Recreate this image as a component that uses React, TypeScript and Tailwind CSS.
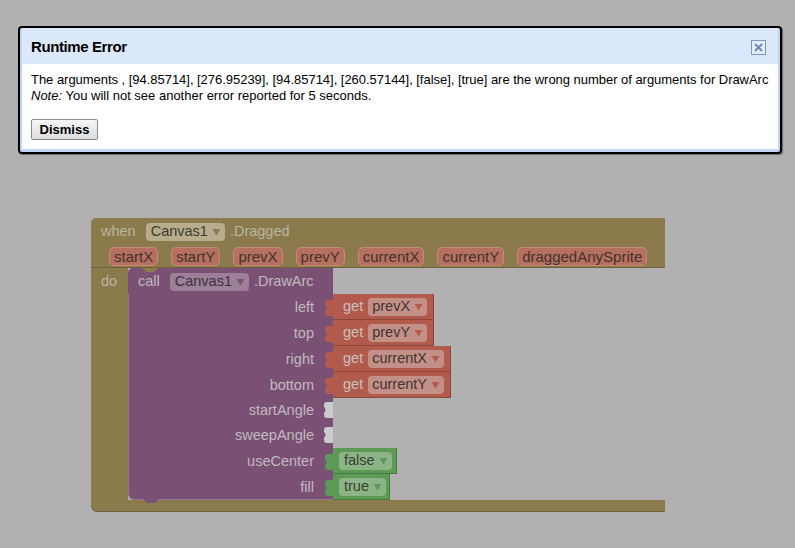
import React from "react";

const Arrow = ({ color }: { color: string }) => (
  <svg width="9" height="8" viewBox="0 0 9 8" className="ml-[4px]">
    <path d="M0.5 1 L8.5 1 L4.5 7.5 Z" fill={color} />
  </svg>
);

const Tab = ({ color }: { color: string }) => (
  <svg width="9" height="16" viewBox="0 0 9 16" className="absolute left-[-8px] top-[6px]">
    <path d="M9 0 L3 0 Q0 0 0 3 L0 5 Q3 8 0 11 L0 13 Q0 16 3 16 L9 16 Z" fill={color} />
  </svg>
);

const EmptySocket = () => (
  <svg width="9" height="16" viewBox="0 0 9 16" className="absolute right-0 top-[4px]">
    <path d="M9 0 L3 0 Q0 0 0 3 L0 5 Q3 8 0 11 L0 13 Q0 16 3 16 L9 16 Z" fill="#cbcbcb" />
  </svg>
);

const GetBlock = ({ name, w }: { name: string; w: string }) => (
  <div className={`relative h-[26px] ${w} bg-[#b25a4b] border-r border-b border-[#8c4539] flex items-center pl-[10px]`}>
    <Tab color="#b25a4b" />
    <span className="text-[#c9c3c0] mr-[5px]">get</span>
    <span className="h-[18px] rounded-[4px] bg-[#c39087] flex items-center pl-[4px] pr-[4px] text-[#3f3532]">
      {name}
      <Arrow color="#b25a4b" />
    </span>
  </div>
);

const BoolBlock = ({ name, w }: { name: string; w: string }) => (
  <div className={`relative h-[26px] ${w} bg-[#5c9a55] border-r border-b border-[#477a42] flex items-center pl-[6px]`}>
    <Tab color="#5c9a55" />
    <span className="h-[18px] rounded-[4px] bg-[#8db487] flex items-center pl-[5px] pr-[4px] text-[#36402f]">
      {name}
      <Arrow color="#5c9a55" />
    </span>
  </div>
);

const ParamChip = ({ name }: { name: string }) => (
  <span className="h-[19px] rounded-[5px] bg-[#b6705f] border border-[#c7897b] flex items-center px-[4px] text-[15px] text-[#44322e]">
    {name}
  </span>
);

const Row = ({
  label,
  h,
  children,
  empty,
}: {
  label: string;
  h: string;
  children?: React.ReactNode;
  empty?: boolean;
}) => (
  <div className={`flex ${h}`}>
    <div className="relative w-[205px] flex items-center justify-end pr-[19px] text-[#c2b9bf]">
      {label}
      {empty && <EmptySocket />}
    </div>
    <div className="flex items-start">{children}</div>
  </div>
);

export default function App() {
  return (
    <div className="relative w-[795px] h-[548px] bg-[#b1b1b1] overflow-hidden font-['Liberation_Sans',Arial,sans-serif]">
      {/* Dialog */}
      <div className="pt-[26px] pl-[18px]">
        <div className="w-[764px] h-[128px] rounded-[4px] border-2 border-black bg-[#c3d5f7] px-[2px] pb-[3px] shadow-[1px_1px_1px_rgba(0,0,0,0.4)] flex flex-col">
          <div className="h-[36px] bg-[#dce8fc] flex items-center justify-between pl-[9px] pr-[12px]">
            <span className="font-bold text-[15px] tracking-[-0.4px] text-black pt-[2px]">Runtime Error</span>
            <span className="mt-[2px] w-[15px] h-[15px] border border-[#7d97c8] bg-[#e3ecfc] flex items-center justify-center">
              <svg width="9" height="9" viewBox="0 0 9 9">
                <path d="M1 1 L8 8 M8 1 L1 8" stroke="#6f88bd" strokeWidth="2" />
              </svg>
            </span>
          </div>
          <div className="flex-1 bg-white pl-[9px] pt-[8px] text-[13px] leading-[16px] text-black">
            <div className="whitespace-nowrap tracking-[-0.032px]">
              The arguments , [94.85714], [276.95239], [94.85714], [260.57144], [false], [true] are the wrong
              number of arguments for DrawArc
            </div>
            <div>
              <i>Note:</i> You will not see another error reported for 5 seconds.
            </div>
            <button className="mt-[15px] h-[21px] w-[67px] border border-[#8a8a8a] rounded-[2px] bg-gradient-to-b from-[#f6f6f6] to-[#dcdcdc] font-bold text-[13px] text-black leading-[18px]">
              Dismiss
            </button>
          </div>
        </div>
      </div>

      {/* Blocks workspace */}
      <div className="absolute left-[91px] top-[218px] text-[14.5px] leading-none">
        {/* top part of event block */}
        <div className="w-[574px] h-[50px] bg-[#8b7b4c] rounded-tl-[5px] border-b border-[#6f623c] flex flex-col">
          <div className="h-[26px] flex items-center pl-[10px] pt-[1px] text-[#bab4a3]">
            <span>when</span>
            <span className="ml-[10px] h-[18px] rounded-[4px] bg-[#b7ad8c] flex items-center pl-[5px] pr-[4px] text-[#3c3a34]">
              Canvas1
              <Arrow color="#8b7b4c" />
            </span>
            <span className="ml-[5px]">.Dragged</span>
          </div>
          <div className="flex items-center pl-[18px] pt-[3px] gap-[13px]">
            <ParamChip name="startX" />
            <ParamChip name="startY" />
            <ParamChip name="prevX" />
            <ParamChip name="prevY" />
            <ParamChip name="currentX" />
            <ParamChip name="currentY" />
            <ParamChip name="draggedAnySprite" />
          </div>
        </div>
        {/* middle */}
        <div className="flex">
          <div className="w-[37px] h-[232px] bg-[#8b7b4c] pl-[10px] pt-[6px] text-[#bab4a3]">do</div>
          <div className="relative">
            <svg width="16" height="5" viewBox="0 0 16 5" className="absolute left-[14px] top-0 z-10">
              <path d="M0 0 L4 4 L12 4 L16 0 Z" fill="#8b7b4c" />
            </svg>
            <svg width="16" height="5" viewBox="0 0 16 5" className="absolute left-[15px] bottom-[-4px] z-10">
              <path d="M0 0 L4 4 L12 4 L16 0 Z" fill="#7a5174" />
            </svg>
            <div className="flex flex-col">
              <div className="flex h-[26px]">
                <div className="w-[205px] bg-[#7a5174] rounded-tl-[5px] flex items-center pl-[10px] pt-[1px] text-[#c2b9bf]">
                  <span>call</span>
                  <span className="ml-[10px] h-[18px] rounded-[4px] bg-[#9e7f99] flex items-center pl-[5px] pr-[4px] text-[#3a3338]">
                    Canvas1
                    <Arrow color="#7a5174" />
                  </span>
                  <span className="ml-[5px]">.DrawArc</span>
                </div>
              </div>
              <div className="bg-[#7a5174] rounded-bl-[6px] w-[205px] h-[206px] absolute left-0 top-[26px] border-l border-b border-[#8f7a8b]" />
              <div className="relative">
                <Row label="left" h="h-[26px]">
                  <GetBlock name="prevX" w="w-[101px]" />
                </Row>
                <Row label="top" h="h-[26px]">
                  <GetBlock name="prevY" w="w-[101px]" />
                </Row>
                <Row label="right" h="h-[26px]">
                  <GetBlock name="currentX" w="w-[118px]" />
                </Row>
                <Row label="bottom" h="h-[26px]">
                  <GetBlock name="currentY" w="w-[118px]" />
                </Row>
                <Row label="startAngle" h="h-[25px]" empty />
                <Row label="sweepAngle" h="h-[25px]" empty />
                <Row label="useCenter" h="h-[26px]">
                  <BoolBlock name="false" w="w-[64px]" />
                </Row>
                <Row label="fill" h="h-[26px]">
                  <BoolBlock name="true" w="w-[57px]" />
                </Row>
              </div>
            </div>
          </div>
        </div>
        {/* bottom bar */}
        <div className="w-[574px] h-[12px] bg-[#8b7b4c] rounded-bl-[6px] border-b border-[#6f623c]" />
      </div>
    </div>
  );
}
